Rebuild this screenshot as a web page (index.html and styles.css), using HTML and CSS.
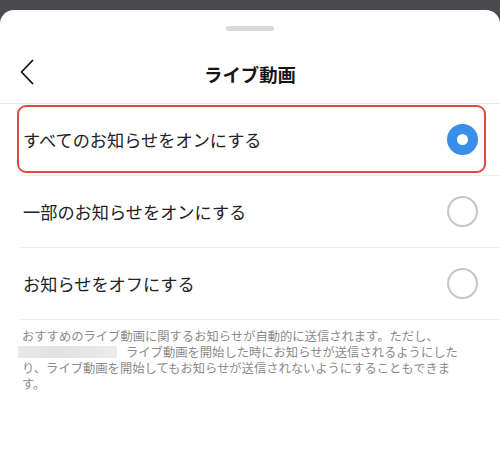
FILE: index.html
```html
<!DOCTYPE html>
<html lang="ja">
<head>
<meta charset="utf-8">
<link rel="stylesheet" href="styles.css">
</head>
<body>
<div class="sheet">
  <div class="handle"></div>
  <header class="header">
    <div class="back">
      <svg width="16" height="26" viewBox="0 0 16 26"><path d="M13.5 1.5 L2.5 13 L13.5 24.5" fill="none" stroke="#111" stroke-width="1.8" stroke-linecap="round" stroke-linejoin="round"/></svg>
    </div>
    <h1 class="title">ライブ動画</h1>
    <div></div>
  </header>
  <ul class="options">
    <li class="option highlight"><span class="label">すべてのお知らせをオンにする</span><span class="radio on"></span></li>
    <li class="option"><span class="label">一部のお知らせをオンにする</span><span class="radio"></span></li>
    <li class="option"><span class="label">お知らせをオフにする</span><span class="radio"></span></li>
  </ul>
  <p class="note">おすすめのライブ動画に関するお知らせが自動的に送信されます。ただし、<br><span class="blur"></span>ライブ動画を開始した時にお知らせが送信されるようにした<br>り、ライブ動画を開始してもお知らせが送信されないようにすることもできま<br>す。</p>
</div>
</body>
</html>
```
FILE: styles.css
```css
* { box-sizing: border-box; }
html, body { margin: 0; padding: 0; }
body {
  background: #4b4b4d;
  width: 500px;
  height: 449px;
  overflow: hidden;
  font-family: "Noto Sans CJK JP", "Noto Sans", sans-serif;
  color: #1e1e1e;
}
.sheet {
  margin-top: 10px;
  height: 439px;
  background: #fff;
  border-radius: 14px 14px 0 0;
  padding-top: 16px;
}
.handle {
  width: 48px;
  height: 5px;
  border-radius: 3px;
  background: #d9d9d9;
  margin: 0 auto;
}
.header {
  margin-top: 14px;
  height: 59px;
  border-bottom: 1px solid #e7e7e7;
  display: grid;
  grid-template-columns: 1fr auto 1fr;
  align-items: center;
}
.back {
  padding-left: 19px;
  display: flex;
  align-items: center;
  margin-top: -5px;
}
.title {
  margin: 0;
  font-size: 18.4px;
  font-weight: 700;
  color: #161616;
  line-height: 1;
}
.options {
  list-style: none;
  margin: 0;
  padding: 0;
}
.option {
  margin-left: 20px;
  height: 72px;
  border-bottom: 1px solid #ececec;
  display: flex;
  align-items: center;
  justify-content: space-between;
  padding-left: 3px;
  padding-right: 22px;
  position: relative;
}
.label {
  font-size: 17.2px;
  color: #222;
}
.highlight::after {
  content: "";
  position: absolute;
  left: -3px;
  right: 14px;
  top: 1px;
  bottom: 2px;
  border: 2px solid #e5483e;
  border-radius: 9px;
}
.radio {
  width: 31px;
  height: 31px;
  border-radius: 50%;
  border: 2px solid #c6c6c6;
  background: #fff;
}
.radio.on {
  border: 10.5px solid #3a8ee8;
}
.note {
  margin: 0;
  padding: 8px 0 0 22px;
  font-size: 12.3px;
  line-height: 16px;
  color: #8a8a8a;
  white-space: nowrap;
}
.blur {
  display: inline-block;
  width: 99px;
  height: 12px;
  vertical-align: -1px;
  margin-left: -4px;
  margin-right: 9px;
  background: linear-gradient(90deg, #e9e9e9, #e2e2e2 40%, #ececec);
  filter: blur(0.6px);
}
```
